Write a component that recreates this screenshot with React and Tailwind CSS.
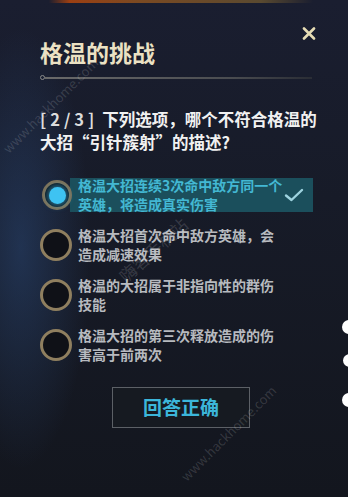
import React from "react";

const FONT = { fontFamily: '"Noto Sans CJK SC", "Noto Sans", sans-serif' };

function Radio({ selected }) {
  if (selected) {
    return (
      <div className="relative z-10 flex h-[30px] w-[30px] shrink-0 items-center justify-center rounded-full border-[3px] border-[#7f6f54] bg-[#0d1016] ml-[2px]">
        <div className="h-[17px] w-[17px] rounded-full bg-[#3ec3f2] shadow-[0_0_6px_2px_rgba(60,190,240,0.6)]" />
      </div>
    );
  }
  return (
    <div className="h-[32px] w-[32px] shrink-0 rounded-full border-[3px] border-[#8f7f5f] bg-[#0f1117]" />
  );
}

function Option({ lines, selected }) {
  return (
    <div className="flex h-[38px] items-center">
      <Radio selected={selected} />
      {selected ? (
        <div className="-ml-[2px] mr-[3px] flex h-[34px] flex-1 items-center justify-between bg-[#1b4f5c] pl-[8px] pr-[8px] text-[14px] font-bold leading-[19px] text-[#43b8d3]">
          <div>
            {lines[0]}
            <br />
            {lines[1]}
          </div>
          <svg width="20" height="14" viewBox="0 0 20 14" className="mr-[1px]">
            <path d="M2 7.5 L7.5 12 L18 2" fill="none" stroke="#9ed3df" strokeWidth="2.4" strokeLinecap="round" strokeLinejoin="round" />
          </svg>
        </div>
      ) : (
        <div className="ml-[6px] text-[14px] font-bold leading-[19px] text-[#b7babf]">
          {lines[0]}
          <br />
          {lines[1]}
        </div>
      )}
    </div>
  );
}

export default function App() {
  return (
    <div
      className="relative h-[497px] w-[348px] overflow-hidden bg-[linear-gradient(180deg,#1a1e30_0%,#171b28_40%,#13161e_100%)]"
      style={FONT}
    >
      <div className="pointer-events-none absolute inset-0 bg-[radial-gradient(ellipse_70px_220px_at_6%_50%,rgba(50,90,150,0.38),transparent)]" />
      <div className="h-[3px] w-full bg-[linear-gradient(90deg,transparent_14%,#9c3f12_20%,#7b4a22_40%,#5a4a30_75%,transparent_90%)]" />

      <div className="relative pl-[40px] pr-[32px] pt-[24px]">
        <div className="flex items-start justify-between">
          <div className="mt-[14px] text-[23px] font-bold leading-[23px] text-[#ebe1c3]">
            格温的挑战
          </div>
          <svg width="14" height="13" viewBox="0 0 14 13">
            <path d="M2 1.5 L12 11.5 M12 1.5 L2 11.5" stroke="#e6dcb4" strokeWidth="2.6" strokeLinecap="round" />
          </svg>
        </div>

        <div className="mt-[11px] flex items-center pr-[4px]">
          <div className="h-[5px] w-[5px] shrink-0 rounded-full border border-[#8a8a8a]" />
          <div className="h-[2px] flex-1 bg-[linear-gradient(90deg,#6a6a6a,#4a4c50_70%,#2a2d35)]" />
        </div>

        <div className="mt-[28px] whitespace-nowrap text-[16.5px] font-bold leading-[23px] text-[#f1f1f1]">
          <span className="tracking-[4px] text-[#dcdcdc]">[2/3]</span>
          <span className="ml-[4px]">下列选项，哪个不符合格温的</span>
          <br />
          大招“引针簇射”的描述?
        </div>

        <div className="mt-[22px] flex flex-col gap-[12px]">
          <Option selected lines={["格温大招连续3次命中敌方同一个", "英雄，将造成真实伤害"]} />
          <Option lines={["格温大招首次命中敌方英雄，会", "造成减速效果"]} />
          <Option lines={["格温的大招属于非指向性的群伤", "技能"]} />
          <Option lines={["格温大招的第三次释放造成的伤", "害高于前两次"]} />
        </div>

        <div className="ml-[72px] mt-[23px] flex h-[41px] w-[138px] items-center justify-center border-[1.5px] border-[#5c6066] bg-[#161a21] text-[19px] font-bold text-[#3cb6da]">
          回答正确
        </div>
      </div>

      <div className="pointer-events-none absolute left-[12px] top-[138px] origin-bottom-left -rotate-45 whitespace-nowrap text-[13px] text-white/15">
        www.hackhome.com
      </div>
      <div className="pointer-events-none absolute left-[190px] top-[466px] origin-bottom-left -rotate-45 whitespace-nowrap text-[13px] text-white/15">
        www.hackhome.com
      </div>
      <div className="pointer-events-none absolute left-[130px] top-[262px] origin-bottom-left -rotate-[42deg] whitespace-nowrap text-[17px] text-white/15">
        嗨客手机站
      </div>

      <div className="absolute left-[342px] top-[320px] h-[14px] w-[14px] rounded-full bg-white" />
      <div className="absolute left-[343px] top-[354px] h-[13px] w-[13px] rounded-full bg-white" />
      <div className="absolute left-[342px] top-[393px] h-[14px] w-[14px] rounded-full bg-white" />
    </div>
  );
}
